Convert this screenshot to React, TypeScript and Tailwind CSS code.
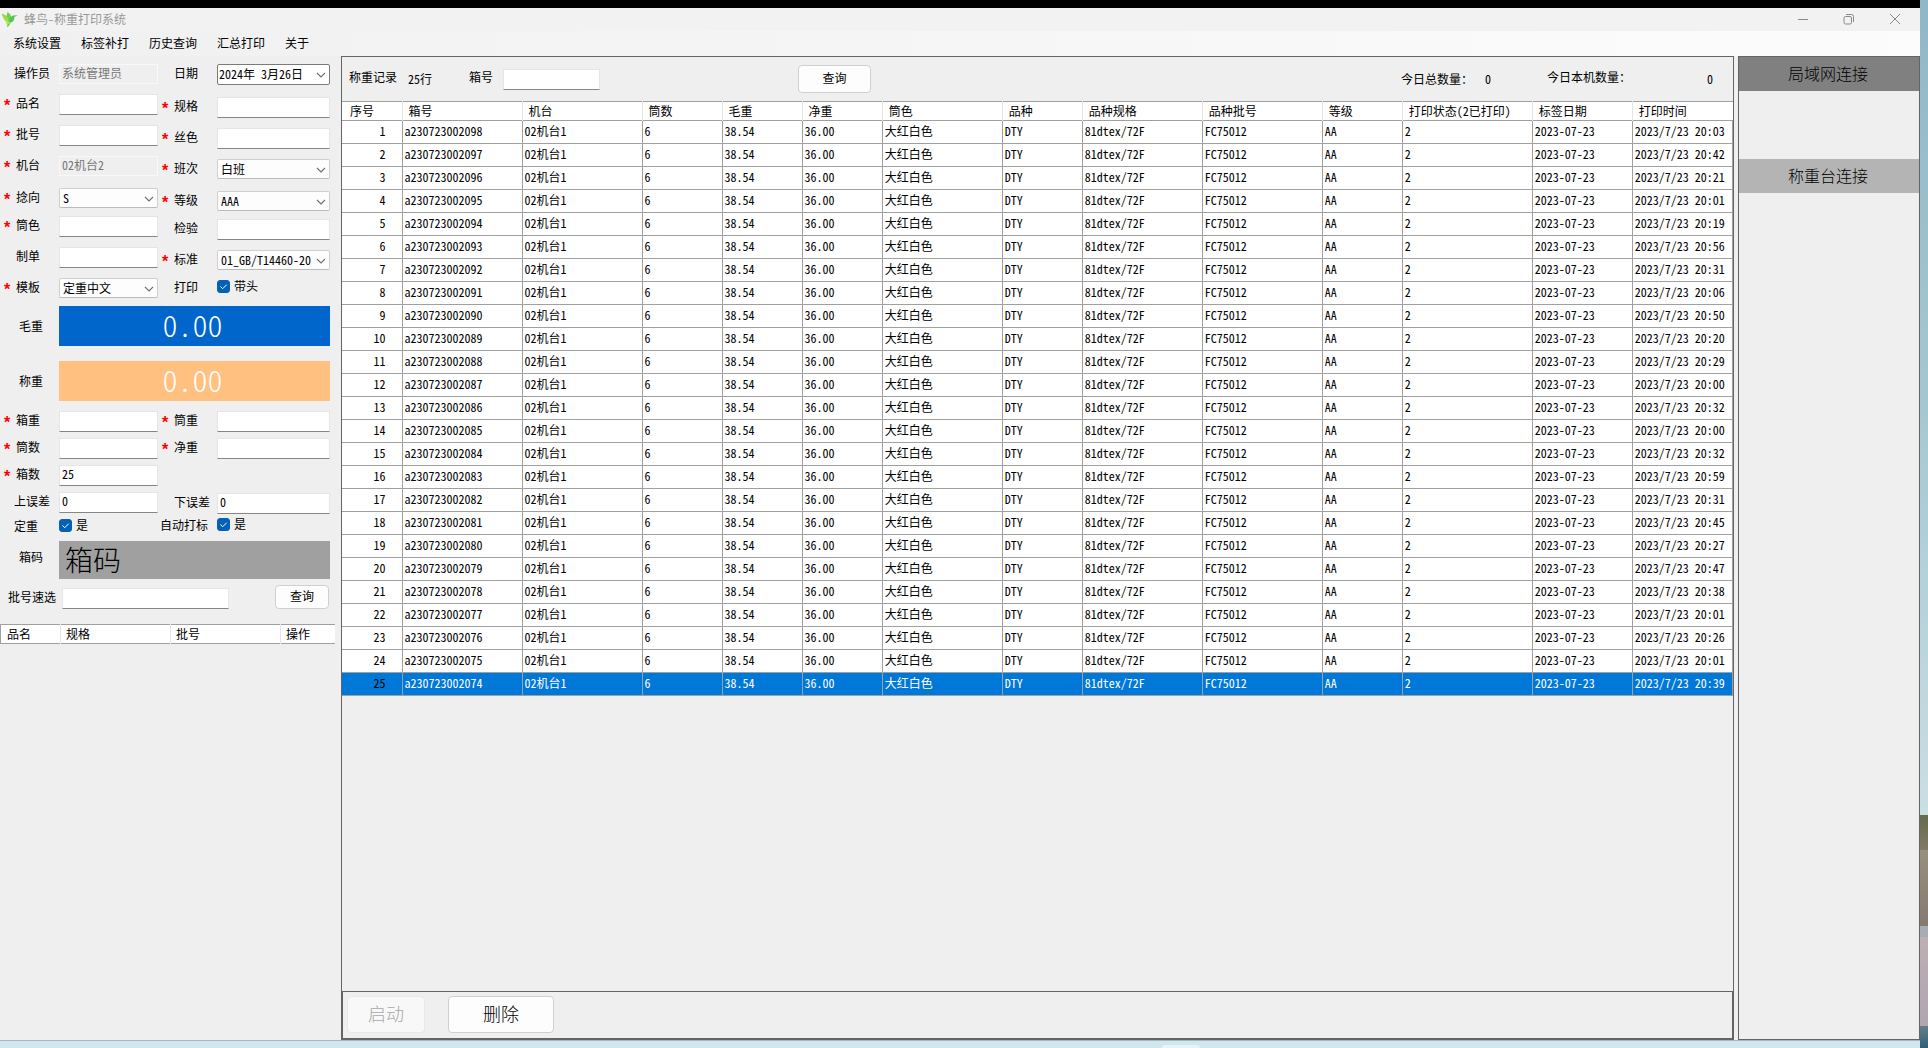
import { useState } from 'react';
import type { ReactNode } from 'react';

const MENU = ['系统设置', '标签补打', '历史查询', '汇总打印', '关于'];

const COLUMNS = [
  { title: '序号', width: 60 },
  { title: '箱号', width: 120 },
  { title: '机台', width: 120 },
  { title: '筒数', width: 80 },
  { title: '毛重', width: 80 },
  { title: '净重', width: 80 },
  { title: '筒色', width: 120 },
  { title: '品种', width: 80 },
  { title: '品种规格', width: 120 },
  { title: '品种批号', width: 120 },
  { title: '等级', width: 80 },
  { title: '打印状态(2已打印)', width: 130 },
  { title: '标签日期', width: 100 },
  { title: '打印时间', width: 100 },
];

const MINUTES = [
  '03', '42', '21', '01', '19', '56', '31', '06', '50', '20', '29', '00', '32',
  '00', '32', '59', '31', '45', '27', '47', '38', '01', '26', '01', '39',
];

const RECORDS = MINUTES.map((minute, i) => [
  `a230723002${String(98 - i).padStart(3, '0')}`,
  '02机台1',
  '6',
  '38.54',
  '36.00',
  '大红白色',
  'DTY',
  '81dtex/72F',
  'FC75012',
  'AA',
  '2',
  '2023-07-23',
  `2023/7/23 20:${minute}`,
]);

const INPUT =
  'block w-full h-[21px] px-0.5 pb-1 bg-white border border-[#e5e5e5] border-b-[#868686] outline-none';

function Chevron() {
  return (
    <svg viewBox="0 0 10 6" className="absolute right-1 top-2 w-2.5 h-1.5 pointer-events-none" aria-hidden="true">
      <path d="M1 1l4 4 4-4" fill="none" stroke="#707070" strokeWidth="1.1" />
    </svg>
  );
}

interface RowProps {
  id: string;
  label: string;
  required?: boolean;
  className?: string;
  labelClass?: string;
  children: ReactNode;
}

function Row({ id, label, required, className = '', labelClass = 'pl-4', children }: RowProps) {
  return (
    <div className={`flex items-start ${className}`}>
      <label htmlFor={id} className={`relative w-[59px] shrink-0 leading-[18px] whitespace-nowrap ${labelClass}`}>
        {required && (
          <span className="absolute left-1 top-1 text-base/4 text-[#f00] font-['Liberation_Sans',sans-serif] font-bold">*</span>
        )}
        {label}
      </label>
      <div className="flex-1 min-w-0">{children}</div>
    </div>
  );
}

function TextField({ id, value = '', disabled }: { id: string; value?: string; disabled?: boolean }) {
  if (disabled) {
    return (
      <input
        id={id}
        disabled
        defaultValue={value}
        className="block w-full h-5 px-0.5 pb-1 bg-[#efefef] border border-[#f8f8f8] text-[#777]"
      />
    );
  }
  return <input id={id} defaultValue={value} className={INPUT} />;
}

function SelectField({ id, value }: { id: string; value: string }) {
  return (
    <div className="relative">
      <select
        id={id}
        defaultValue={value}
        className="block w-full h-5 pl-[3px] pr-4 appearance-none bg-[#fdfdfd] border border-[#cfcfcf] border-b-[#bbb] rounded-xs outline-none"
      >
        <option>{value}</option>
      </select>
      <Chevron />
    </div>
  );
}

function CheckField({ id, text }: { id: string; text: string }) {
  const [checked, setChecked] = useState(true);
  return (
    <div className="flex items-center gap-1 h-4">
      <span className="relative">
        <input
          id={id}
          type="checkbox"
          checked={checked}
          onChange={(e) => setChecked(e.target.checked)}
          className="block appearance-none w-[13px] h-[13px] rounded-[3px] border border-[#0560b6] checked:bg-[#0560b6]"
        />
        <svg viewBox="0 0 13 13" className="absolute inset-0 pointer-events-none" aria-hidden="true">
          <path d="M3.5 6.5l2.2 2.2 4-4" fill="none" stroke="#fff" strokeWidth="1" />
        </svg>
      </span>
      <span>{text}</span>
    </div>
  );
}

function TitleBar() {
  return (
    <header className="flex items-center h-[23px] pl-1 bg-[#f2f2f2] text-[#999]">
      <svg viewBox="0 0 16 16" className="w-4 h-4 -ml-0.5" aria-hidden="true">
        <path d="M0 1.5l4.500 2.500L5.500 0C8 1.500 9.300 3.500 9.500 5.800L7.500 9.800 4 9C1.800 7.200.5 4.800 0 1.500z" fill="#6fd04a" />
        <path d="M0 1.500l5.500 4L7.500 9.800 4 9C1.800 7.200.5 4.800 0 1.500z" fill="#a4dc3c" />
        <path d="M7.500 8c.6-2.300 1.800-4 3.800-4.400L15.800 3.300 12.300 5c.3 2.700-.8 4.600-3.300 5.600L5.500 15.500 5 11z" fill="#52c65a" />
        <path d="M3.500 9l5.500 1.200-4 3z" fill="#b9e34b" />
      </svg>
      <h1 className="pl-1.5 pb-0.5">蜂鸟-称重打印系统</h1>
      <div className="ml-auto flex items-center pr-[19px] pb-0.5 gap-[34px]">
        <button type="button" aria-label="最小化">
          <svg viewBox="0 0 12 12" className="w-3 h-3" fill="none" stroke="#8a8a8a">
            <path d="M1 6.500h10" />
          </svg>
        </button>
        <button type="button" aria-label="还原">
          <svg viewBox="0 0 12 12" className="w-3 h-3" fill="none" stroke="#8a8a8a">
            <rect x="1" y="3.500" width="7.500" height="7.500" rx="1.500" />
            <path d="M3 1.500h5.500a2 2 0 012 2V9" />
          </svg>
        </button>
        <button type="button" aria-label="关闭">
          <svg viewBox="0 0 12 12" className="w-3 h-3" fill="none" stroke="#8a8a8a">
            <path d="M1 1l10 10M11 1L1 11" />
          </svg>
        </button>
      </div>
    </header>
  );
}

function SidePanel() {
  return (
    <aside className="flex flex-col w-[341px] shrink-0 bg-[#efefef]">
      <div className="flex pt-2 pr-[11px]">
        <div className="flex flex-col w-[158px]">
          <Row id="operator" label="操作员" labelClass="pl-3.5"><TextField id="operator" value="系统管理员" disabled /></Row>
          <Row id="name" label="品名" required className="mt-2.5"><TextField id="name" /></Row>
          <Row id="batch" label="批号" required className="mt-2.5"><TextField id="batch" /></Row>
          <Row id="machine" label="机台" required className="mt-2.5"><TextField id="machine" value="02机台2" disabled /></Row>
          <Row id="twist" label="捻向" required className="mt-3"><SelectField id="twist" value="S" /></Row>
          <Row id="tube" label="筒色" required className="mt-2"><TextField id="tube" /></Row>
          <Row id="order" label="制单" className="mt-2.5"><TextField id="order" /></Row>
          <Row id="template" label="模板" required className="mt-2.5"><SelectField id="template" value="定重中文" /></Row>
        </div>
        <div className="flex flex-col flex-1">
          <Row id="date" label="日期" labelClass="pl-4">
            <div className="relative">
              <input
                id="date"
                defaultValue="2024年 3月26日"
                className="block w-full h-[21px] pl-px pr-4 pb-0.5 bg-white border border-[#7a7a7a] rounded-xs outline-none"
              />
              <Chevron />
            </div>
          </Row>
          <Row id="spec" label="规格" required className="mt-3"><TextField id="spec" /></Row>
          <Row id="silk" label="丝色" required className="mt-2.5"><TextField id="silk" /></Row>
          <Row id="shift" label="班次" required className="mt-2.5"><SelectField id="shift" value="白班" /></Row>
          <Row id="grade" label="等级" required className="mt-3"><SelectField id="grade" value="AAA" /></Row>
          <Row id="inspect" label="检验" className="mt-2"><TextField id="inspect" /></Row>
          <Row id="standard" label="标准" required className="mt-2.5"><SelectField id="standard" value="01_GB/T14460-20" /></Row>
          <Row id="head" label="打印" className="mt-2"><CheckField id="head" text="带头" /></Row>
        </div>
      </div>

      <div className="flex items-center mt-2 pr-[11px]">
        <span className="w-[59px] pl-[19px]">毛重</span>
        <output className="flex-1 h-10 pr-1 bg-[#0066cc] text-white text-3xl/9 text-center font-light">0.00</output>
      </div>
      <div className="flex items-center mt-[15px] pr-[11px]">
        <span className="w-[59px] pl-[19px]">称重</span>
        <output className="flex-1 h-10 pr-1 bg-[#ffc080] text-white text-3xl/9 text-center font-light">0.00</output>
      </div>

      <div className="flex pt-2.5 pr-[11px]">
        <div className="flex flex-col gap-1.5 w-[158px]">
          <Row id="boxWeight" label="箱重" required><TextField id="boxWeight" /></Row>
          <Row id="tubeCount" label="筒数" required><TextField id="tubeCount" /></Row>
          <Row id="boxCount" label="箱数" required><TextField id="boxCount" value="25" /></Row>
          <Row id="upper" label="上误差" labelClass="pl-3.5"><TextField id="upper" value="0" /></Row>
          <Row id="fixed" label="定重" labelClass="pl-3.5" className="-mt-0.5"><CheckField id="fixed" text="是" /></Row>
        </div>
        <div className="flex flex-col gap-1.5 flex-1">
          <Row id="tubeWeight" label="筒重" required><TextField id="tubeWeight" /></Row>
          <Row id="netWeight" label="净重" required><TextField id="netWeight" /></Row>
          <Row id="lower" label="下误差" className="mt-7"><TextField id="lower" value="0" /></Row>
          <Row id="auto" label="自动打标" labelClass="pl-0.5" className="-mt-1"><CheckField id="auto" text="是" /></Row>
        </div>
      </div>

      <div className="flex items-center mt-1.5 pr-[11px]">
        <span className="w-[59px] pl-[19px] pb-1.5">箱码</span>
        <output className="flex-1 h-[38px] pl-1.5 bg-[#a0a0a0] text-[28px]/9 font-light">箱码</output>
      </div>

      <div className="flex items-end mt-1.5 pr-3">
        <label htmlFor="quick" className="w-[62px] pl-2 pb-1 whitespace-nowrap">批号速选</label>
        <div className="flex-1"><TextField id="quick" /></div>
        <button type="button" className="w-[54px] h-6 ml-[46px] pb-0.5 bg-[#fdfdfd] border border-[#d0d0d0] rounded">查询</button>
      </div>

      <table className="table-fixed w-[335px] mt-[15px] bg-white border-y border-[#a0a0a0]">
        <colgroup>
          <col className="w-[60px]" />
          <col className="w-[110px]" />
          <col className="w-[110px]" />
          <col />
        </colgroup>
        <thead>
          <tr className="h-[18px] leading-[18px] text-left">
            <th className="pl-1.5 font-normal border-l border-[#a0a0a0]">品名</th>
            <th className="pl-[5px] font-normal border-l border-[#e5e5e5]">规格</th>
            <th className="pl-[5px] font-normal border-l border-[#e5e5e5]">批号</th>
            <th className="pl-[5px] font-normal border-l border-[#e5e5e5]">操作</th>
          </tr>
        </thead>
      </table>
    </aside>
  );
}

function RecordTable() {
  const [selected, setSelected] = useState(24);

  return (
    <table className="table-fixed w-full border-t border-[#a0a0a0] bg-white">
      <colgroup>
        {COLUMNS.map((c) => (
          <col key={c.title} style={{ width: c.width }} />
        ))}
      </colgroup>
      <thead>
        <tr className="h-[18px] leading-[18px] text-left border-b border-[#a0a0a0]">
          {COLUMNS.map((c) => (
            <th
              key={c.title}
              className="pl-1.5 first:pl-2 font-normal whitespace-nowrap border-r border-[#e5e5e5] last:border-r-0"
            >
              {c.title}
            </th>
          ))}
        </tr>
      </thead>
      <tbody className="leading-5">
        {RECORDS.map((row, i) => (
          <tr
            key={row[0]}
            onClick={() => setSelected(i)}
            className={`h-[23px] align-top border-b border-[#a0a0a0] ${i === selected ? 'bg-[#0078d7] text-white' : ''}`}
          >
            <td className="pr-4 text-right text-black border-r border-[#a0a0a0]">{i + 1}</td>
            {row.map((cell, j) => (
              <td key={j} className="pl-0.5 whitespace-nowrap border-r border-[#a0a0a0]">
                {cell}
              </td>
            ))}
          </tr>
        ))}
      </tbody>
    </table>
  );
}

function RecordsPanel() {
  return (
    <main className="flex flex-col flex-1 min-w-0 bg-[#efefef] border border-[#646464]">
      <div className="flex items-center h-11 pl-[7px] pr-5">
        <h2 className="pb-1">称重记录</h2>
        <span className="ml-[11px]">25行</span>
        <label htmlFor="boxNo" className="ml-[37px] pb-1">箱号</label>
        <div className="w-[97px] ml-2.5"><TextField id="boxNo" /></div>
        <button type="button" className="w-[73px] h-7 ml-[198px] pb-0.5 bg-[#fdfdfd] border border-[#d0d0d0] rounded">查询</button>
        <span className="ml-auto">今日总数量：</span>
        <span className="ml-3">0</span>
        <span className="ml-14 pb-1">今日本机数量：</span>
        <span className="ml-[76px]">0</span>
      </div>
      <RecordTable />
      <div className="flex items-start gap-[23px] h-12 mt-auto pt-1 pl-1 border border-[#646464]">
        <button type="button" disabled className="w-[78px] h-[37px] pb-1 bg-[#f8f8f8] border border-[#e8e8e8] rounded text-lg/7 text-[#a8a8a8] font-light">
          启动
        </button>
        <button type="button" className="w-[106px] h-[37px] pb-1 bg-[#fdfdfd] border border-[#d0d0d0] rounded text-lg/7 font-light">
          删除
        </button>
      </div>
    </main>
  );
}

// strip of desktop wallpaper left visible beside the window
function Wallpaper() {
  return (
    <div className="flex flex-col w-2 shrink-0" aria-hidden="true">
      <div className="flex-[815] bg-linear-to-b from-[#8fb8c8] via-[#a4c8d3] to-[#c9dfe3]" />
      <div className="flex-[35] bg-linear-to-b from-[#656b4c] to-[#7f7a62]" />
      <div className="flex-[76] bg-linear-to-b from-[#98907c] to-[#857a72]" />
      <div className="flex-[11] bg-[#a8adb5]" />
      <div className="flex-[89] bg-linear-to-b from-[#bdb0b4] to-[#b0a6b0]" />
      <div className="flex-[22] bg-linear-to-b from-[#63808c] to-[#2f5f75]" />
    </div>
  );
}

export default function App() {
  return (
    <div className="flex h-screen bg-black text-xs text-black leading-4 font-['Noto_Sans_CJK_SC',sans-serif] [font-feature-settings:'hwid']">
      <div className="flex flex-col flex-1 min-w-0 pt-2">
        <TitleBar />
        <nav className="flex items-center gap-5 h-[25px] pl-[13px] pb-0.5 bg-linear-to-r from-[#f0f0f0] to-[#fcfcfc]">
          {MENU.map((item) => (
            <button key={item} type="button">{item}</button>
          ))}
        </nav>
        <div className="flex flex-1 min-h-0 bg-[#f0f0f0]">
          <SidePanel />
          <RecordsPanel />
          <aside className="flex flex-col w-[182px] shrink-0 ml-1 bg-[#efefef] border border-[#646464] text-base font-light">
            <button type="button" className="h-[34px] pb-0.5 pr-0.5 bg-[#808080]">局域网连接</button>
            <button type="button" className="h-[34px] mt-[68px] pb-0.5 pr-0.5 bg-[#b4b4b4]">称重台连接</button>
          </aside>
        </div>
        <div className="flex items-end justify-center h-2 pl-[442px] border-t border-[#a9b6ba] bg-[#cfe7ee]">
          <div className="w-[38px] h-[3px] rounded-t bg-[#e6f3f7]" />
        </div>
      </div>
      <Wallpaper />
    </div>
  );
}
